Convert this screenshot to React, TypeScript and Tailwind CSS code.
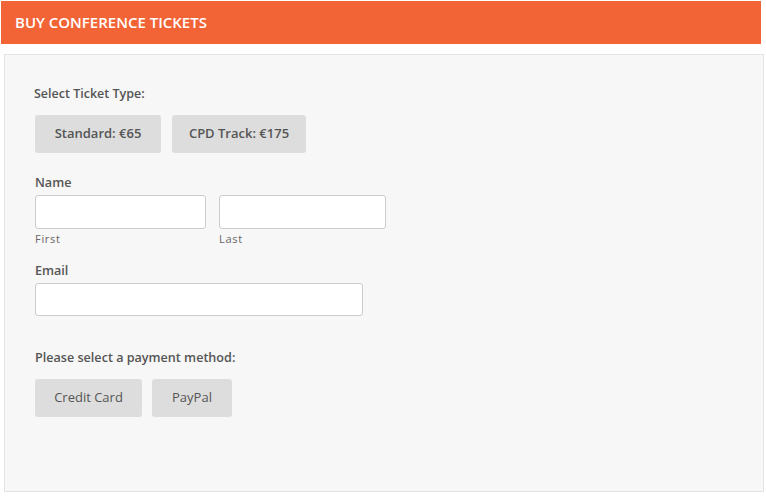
import React from "react";

const font = { fontFamily: '"Open Sans", "Noto Sans", sans-serif' };

function Btn({ children, bold, w }: { children: React.ReactNode; bold?: boolean; w: string }) {
  return (
    <button
      className={`h-[38px] ${w} rounded-[3px] bg-[#dddddd] text-[13px] text-[#555555] ${bold ? "font-semibold" : "font-normal"}`}
    >
      {children}
    </button>
  );
}

export default function App() {
  return (
    <div className="w-[766px] h-[498px] bg-white pt-[1px]" style={font}>
      <div className="ml-[1px] w-[760px] h-[43px] bg-[#f26436] flex items-center pl-[14px]">
        <h1 className="text-[15px] font-semibold text-white">BUY CONFERENCE TICKETS</h1>
      </div>

      <div className="ml-[4px] mt-[10px] w-[760px] h-[438px] border border-[#e3e3e3] bg-[#f7f7f7] pl-[30px] pt-[30px]">
        <div className="-ml-[1px] text-[12.5px] font-semibold text-[#555555] leading-[18px]">Select Ticket Type:</div>
        <div className="flex gap-[11px] mt-[12px]">
          <Btn bold w="w-[126px]">Standard: €65</Btn>
          <Btn bold w="w-[134px]">CPD Track: €175</Btn>
        </div>

        <div className="mt-[21px] text-[12.6px] font-semibold text-[#555555] leading-[18px]">Name</div>
        <div className="flex gap-[13px] mt-[3px]">
          <div className="flex flex-col">
            <input className="w-[171px] h-[34px] bg-white border border-[#cccccc] rounded-[3px]" />
            <span className="text-[11px] text-[#666666] tracking-[0.7px] mt-[2px] leading-[16px]">First</span>
          </div>
          <div className="flex flex-col">
            <input className="w-[167px] h-[34px] bg-white border border-[#cccccc] rounded-[3px]" />
            <span className="text-[11px] text-[#666666] tracking-[0.7px] mt-[2px] leading-[16px]">Last</span>
          </div>
        </div>

        <div className="mt-[15px] text-[12.6px] font-semibold text-[#555555] leading-[18px]">Email</div>
        <input className="mt-[3px] block w-[328px] h-[33px] bg-white border border-[#cccccc] rounded-[3px]" />

        <div className="mt-[33px] text-[12.6px] font-semibold text-[#555555] leading-[18px]">
          Please select a payment method:
        </div>
        <div className="flex gap-[10px] mt-[12px]">
          <Btn w="w-[107px]">Credit Card</Btn>
          <Btn w="w-[80px]">PayPal</Btn>
        </div>
      </div>
    </div>
  );
}
